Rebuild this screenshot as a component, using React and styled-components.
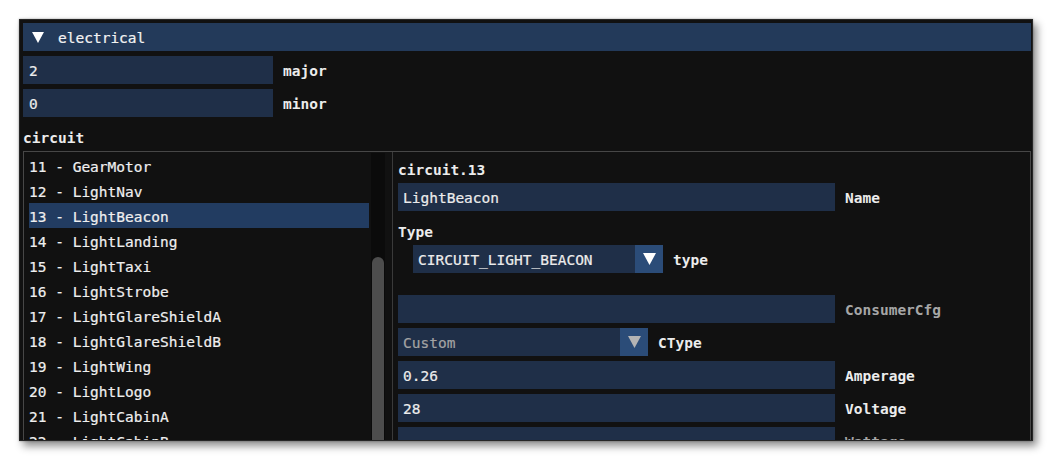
import React from "react";
import styled, { createGlobalStyle } from "styled-components";

const Global = createGlobalStyle`
  html, body { margin: 0; padding: 0; background: #ffffff; }
  body { font-family: "DejaVu Sans Mono", "Liberation Mono", monospace; }
  * { box-sizing: border-box; }
`;

const Page = styled.div`
  width: 1053px;
  height: 461px;
  padding: 19px 0 0 19px;
  overflow: hidden;
`;

const Window = styled.div`
  width: 1014px;
  height: 422px;
  background: #111111;
  border: 1px solid #262626;
  padding: 3px 1px 3px 3px;
  overflow: hidden;
  box-shadow: 0 0 2px rgba(0, 0, 0, 0.35), 4px 5px 8px rgba(0, 0, 0, 0.45);
  display: flex;
  flex-direction: column;
  font-size: 14.5px;
  color: #ececec;
  -webkit-text-stroke: 0.2px currentColor;
`;

const Header = styled.div`
  height: 28px;
  flex: none;
  background: #233a5a;
  display: flex;
  align-items: center;
  padding-left: 9px;
  gap: 14px;
  color: #f2f2f2;
`;

const HeaderText = styled.span`
  padding-top: 2px;
`;

const Row = styled.div`
  display: flex;
  align-items: center;
  gap: 10px;
  flex: none;
  margin-top: ${(p) => p.$mt ?? 5}px;
  margin-left: ${(p) => p.$ml ?? 0}px;
`;

const Field = styled.div`
  width: ${(p) => p.$w}px;
  height: 28px;
  background: #1f2f48;
  display: flex;
  align-items: center;
  padding: 2px 0 0 ${(p) => p.$pl ?? 5}px;
  color: ${(p) => (p.$dim ? "#a3a3a3" : "#ececec")};
  white-space: nowrap;
  overflow: hidden;
`;

const Label = styled.span`
  padding-top: 2px;
  font-weight: bold;
  -webkit-text-stroke: 0;
  color: ${(p) => (p.$dim ? "#a6a6a6" : "#ececec")};
  white-space: nowrap;
`;

const SectionTitle = styled.div`
  height: 29px;
  flex: none;
  display: flex;
  align-items: center;
  padding-top: 2px;
  margin-top: 5px;
  font-weight: bold;
  -webkit-text-stroke: 0;
`;

const Frame = styled.div`
  flex: 1;
  min-height: 320px;
  border: 1px solid #474747;
  display: flex;
`;

const ListPane = styled.div`
  width: 369px;
  flex: none;
  display: flex;
  padding: 1px 7px 0 5px;
  border-right: 1px solid #3a3a3a;
`;

const List = styled.div`
  flex: 1;
  display: flex;
  flex-direction: column;
`;

const ListItem = styled.div`
  height: 25px;
  flex: none;
  display: flex;
  align-items: center;
  padding-top: 2px;
  white-space: nowrap;
  background: ${(p) => (p.$selected ? "#223c61" : "transparent")};
  color: #efefef;
`;

const Track = styled.div`
  width: 14px;
  flex: none;
  margin-left: 2px;
  background: #0b0b0b;
  padding: 104px 1px 0 1px;
`;

const Thumb = styled.div`
  height: 200px;
  border-radius: 6px;
  background: #4d4d4d;
`;

const DetailPane = styled.div`
  flex: 1;
  padding: 6px 0 0 5px;
  display: flex;
  flex-direction: column;
`;

const DetailTitle = styled.div`
  height: 22px;
  display: flex;
  align-items: center;
  padding-top: 2px;
  font-weight: bold;
  -webkit-text-stroke: 0;
  margin-bottom: -2px;
`;

const SubHeading = styled.div`
  height: 29px;
  display: flex;
  align-items: center;
  padding-top: 2px;
  margin-top: 5px;
  font-weight: bold;
  -webkit-text-stroke: 0;
`;

const Combo = styled.div`
  width: 250px;
  height: 28px;
  display: flex;
  background: #1f2f48;
`;

const ComboText = styled.div`
  flex: 1;
  display: flex;
  align-items: center;
  padding: 2px 0 0 5px;
  color: ${(p) => (p.$dim ? "#a3a3a3" : "#ececec")};
  white-space: nowrap;
`;

const ComboButton = styled.div`
  width: 28px;
  height: 28px;
  background: #2b4c78;
  display: flex;
  align-items: center;
  justify-content: center;
`;

const Tri = ({ size = 13, color = "#ffffff" }) => (
  <svg width={size} height={size - 1} viewBox="0 0 13 12">
    <polygon points="0,0 13,0 6.5,12" fill={color} />
  </svg>
);

const items = [
  "11 - GearMotor",
  "12 - LightNav",
  "13 - LightBeacon",
  "14 - LightLanding",
  "15 - LightTaxi",
  "16 - LightStrobe",
  "17 - LightGlareShieldA",
  "18 - LightGlareShieldB",
  "19 - LightWing",
  "20 - LightLogo",
  "21 - LightCabinA",
  "22 - LightCabinB",
];

export default function App() {
  return (
    <>
      <Global />
      <Page>
        <Window>
          <Header>
            <Tri size={12} />
            <HeaderText>electrical</HeaderText>
          </Header>
          <Row>
            <Field $w={250} $pl={6}>2</Field>
            <Label>major</Label>
          </Row>
          <Row>
            <Field $w={250} $pl={6}>0</Field>
            <Label>minor</Label>
          </Row>
          <SectionTitle>circuit</SectionTitle>
          <Frame>
            <ListPane>
              <List>
                {items.map((t) => (
                  <ListItem key={t} $selected={t.startsWith("13")}>
                    {t}
                  </ListItem>
                ))}
              </List>
              <Track>
                <Thumb />
              </Track>
            </ListPane>
            <DetailPane>
              <DetailTitle>circuit.13</DetailTitle>
              <Row>
                <Field $w={437}>LightBeacon</Field>
                <Label>Name</Label>
              </Row>
              <SubHeading>Type</SubHeading>
              <Row $mt={0} $ml={15}>
                <Combo>
                  <ComboText>CIRCUIT_LIGHT_BEACON</ComboText>
                  <ComboButton>
                    <Tri />
                  </ComboButton>
                </Combo>
                <Label>type</Label>
              </Row>
              <Row $mt={22}>
                <Field $w={437} />
                <Label $dim>ConsumerCfg</Label>
              </Row>
              <Row>
                <Combo>
                  <ComboText $dim>Custom</ComboText>
                  <ComboButton>
                    <Tri color="#b4b4b4" />
                  </ComboButton>
                </Combo>
                <Label>CType</Label>
              </Row>
              <Row>
                <Field $w={437}>0.26</Field>
                <Label>Amperage</Label>
              </Row>
              <Row>
                <Field $w={437}>28</Field>
                <Label>Voltage</Label>
              </Row>
              <Row>
                <Field $w={437} />
                <Label $dim>Wattage</Label>
              </Row>
            </DetailPane>
          </Frame>
        </Window>
      </Page>
    </>
  );
}
